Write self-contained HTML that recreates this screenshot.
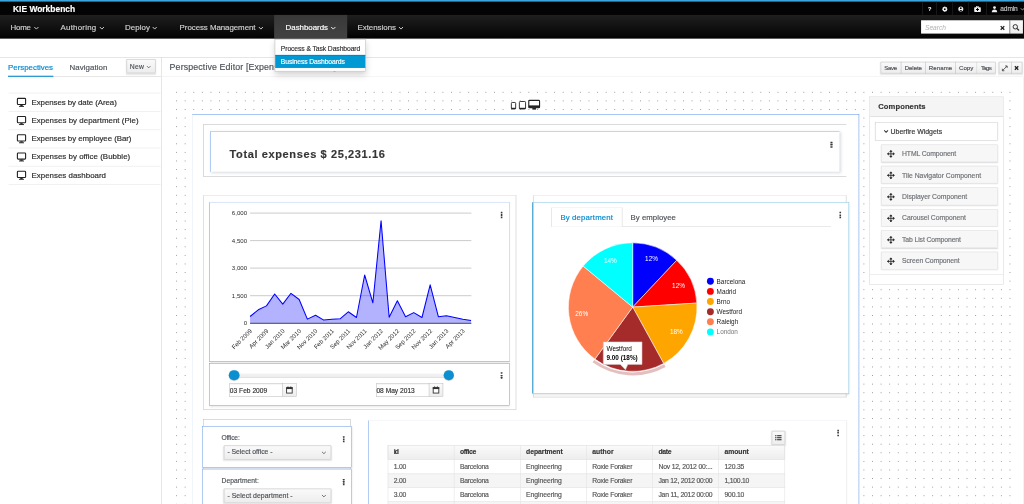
<!DOCTYPE html>
<html lang="en">
<head>
<meta charset="utf-8">
<title>KIE Workbench</title>
<style>
html,body{margin:0;padding:0}
body{width:1024px;height:504px;overflow:hidden;background:#fff;font-family:"Liberation Sans",sans-serif;color:#363636}
#s{position:absolute;left:0;top:0;width:1920px;height:945px;transform:scale(.5333333);transform-origin:0 0;overflow:hidden;font-size:12px;background:#fff;filter:blur(.75px);-webkit-text-stroke:.3px}
.a{position:absolute;box-sizing:border-box}
.t{position:absolute;line-height:1;white-space:nowrap}
svg{position:absolute;overflow:visible}
.nav{color:#d0d0d0;font-size:14.812px}
.btn{position:absolute;box-sizing:border-box;border:1px solid #bbb;background:linear-gradient(#fafafa,#ededed);box-shadow:0 2px 3px rgba(3,3,3,.1)}
.li{position:absolute;left:16.406px;width:285px;height:1px;background:#e4e4e4}
.lt{font-size:14.812px;color:#2b2b2b;left:59.062px}
.cmp{position:absolute;box-sizing:border-box;left:1651.5px;width:219.188px;height:33.375px;border:1px solid #e2e2e2;background:#f7f7f7;box-shadow:0 1px 2px rgba(3,3,3,.15)}
.ct{font-size:12.75px;color:#6e7277;left:1691.25px}
.card{position:absolute;box-sizing:border-box;background:#fff;border:1px solid #6f9ee9;box-shadow:1px 2px 4px rgba(3,3,3,.12)}
.colbox{position:absolute;box-sizing:border-box;border:1px solid #bcbcbc;background:#fff}
.keb i{position:absolute;left:0;width:3.375px;height:3.188px;background:#3a3a3a;border-radius:0.375px}
.keb{position:absolute;width:3.375px;height:13.125px}
.ax{font-size:6.1px;fill:#2a2a2a;-webkit-text-stroke:0;font-family:"Liberation Sans",sans-serif}
.th{font-size:12.75px;font-weight:bold;color:#363636}
.td{font-size:12.75px;color:#565656}
</style>
</head>
<body>
<div id="s">

<!-- ================= HEADER ================= -->
<div class="a" style="left:0;top:0;width:1920px;height:72.375px;background:#030303"></div>
<div class="a" style="left:0;top:0;width:1920px;height:3.188px;background:#39a5dc"></div>
<div class="a" style="left:0;top:28.125px;width:1920px;height:44.25px;background:linear-gradient(#1f1f1f,#030303)"></div>
<div class="t" style="left:24.375px;top:8.812px;font-size:15.806px;font-weight:bold;color:#fff">KIE Workbench</div>

<!-- active nav bg -->
<div class="a" style="left:513.938px;top:28.125px;width:136.688px;height:44.25px;background:linear-gradient(#383838,#434343)"></div>

<div class="t nav" style="left:19.875px;top:43.688px;letter-spacing:-0.42px">Home</div>
<div class="t nav" style="left:113.625px;top:43.688px;letter-spacing:0.418px">Authoring</div>
<div class="t nav" style="left:234.375px;top:43.688px;letter-spacing:0.116px">Deploy</div>
<div class="t nav" style="left:336.75px;top:43.688px;letter-spacing:-0.094px">Process Management</div>
<div class="t nav" style="left:535.5px;top:43.688px;color:#fff;letter-spacing:-0.021px">Dashboards</div>
<div class="t nav" style="left:670.312px;top:43.688px;letter-spacing:-0.03px">Extensions</div>
<svg style="left:0;top:0" width="1920px" height="75px" viewBox="0 0 1024 40" fill="none" stroke="#dbdada" stroke-width="0.9">
<polyline points="34.3,27 36.4,29.1 38.5,27"/>
<polyline points="99.8,27 101.9,29.1 104,27"/>
<polyline points="152.7,27 154.7,29.1 156.7,27"/>
<polyline points="258.9,27 260.9,29.1 262.9,27"/>
<polyline points="331.2,27 333.3,29.1 335.4,27" stroke="#fff"/>
<polyline points="399,27 401,29.1 403,27"/>
</svg>

<!-- utility icons -->
<div class="a" style="left:1728.75px;top:3.188px;width:1px;height:24.938px;background:#2b2b2b"></div>
<div class="a" style="left:1755.375px;top:3.188px;width:1px;height:24.938px;background:#2b2b2b"></div>
<div class="a" style="left:1785.75px;top:3.188px;width:1px;height:24.938px;background:#2b2b2b"></div>
<div class="a" style="left:1815.75px;top:3.188px;width:1px;height:24.938px;background:#2b2b2b"></div>
<div class="a" style="left:1849.125px;top:3.188px;width:1px;height:24.938px;background:#2b2b2b"></div>
<div class="t" style="left:1739.812px;top:12.188px;font-size:10.5px;font-weight:bold;color:#f0f0f0">?</div>
<svg style="left:0;top:0" width="1920px" height="75px" viewBox="0 0 1024 40">
<!-- gear -->
<circle cx="944.8" cy="9.2" r="1.65" fill="none" stroke="#f0f0f0" stroke-width="1.3"/>
<g stroke="#f0f0f0" stroke-width="1.05"><line x1="944.8" y1="6.6" x2="944.8" y2="11.8"/><line x1="942.2" y1="9.2" x2="947.4" y2="9.2"/><line x1="943" y1="7.4" x2="946.6" y2="11"/><line x1="946.6" y1="7.4" x2="943" y2="11"/></g>
<circle cx="944.8" cy="9.2" r="0.85" fill="#030303"/>
<!-- user circle -->
<circle cx="960.8" cy="9.1" r="2.5" fill="#f0f0f0"/>
<circle cx="960.8" cy="8.2" r="0.9" fill="#030303"/><path d="M959.3 10.9 q1.5 -2 3 0z" fill="#030303"/>
<!-- medkit -->
<rect x="974.2" y="7.2" width="6.6" height="4.7" rx=".7" fill="#f0f0f0"/><rect x="976.3" y="6.3" width="2.4" height="1.2" fill="none" stroke="#f0f0f0" stroke-width=".6"/>
<path d="M977 8.1h1v1h1v1h-1v1h-1v-1h-1v-1h1z" fill="#030303"/>
<!-- user -->
<circle cx="994.5" cy="7.6" r="1.45" fill="#f0f0f0"/><path d="M991.8 12.2 q0 -2.8 2.7 -2.8 q2.7 0 2.7 2.8z" fill="#f0f0f0"/>
<polyline points="1020.8,8.3 1022.5,10 1024.2,8.3" fill="none" stroke="#c8c8c8" stroke-width=".8"/>
</svg>
<div class="t" style="left:1875.562px;top:11.25px;font-size:12.375px;color:#c4c4c4;letter-spacing:-0.223px">admin</div>

<!-- search -->
<div class="a" style="left:1726.875px;top:38.25px;width:165.75px;height:25.125px;background:#fff"></div>
<div class="a" style="left:1892.625px;top:38.25px;width:25.312px;height:25.125px;background:linear-gradient(#fafafa,#ededed);border-left:1px solid #bbb"></div>
<div class="t" style="left:1734.375px;top:46.125px;font-size:12.375px;font-style:italic;color:#b0b0b0;-webkit-text-stroke:0;letter-spacing:0.034px">Search</div>
<svg style="left:0;top:0" width="1920px" height="75px" viewBox="0 0 1024 40" fill="none">
<path d="M1000.7 26.1l3.6 3.6m0 -3.6l-3.6 3.6" stroke="#222" stroke-width="1.3"/>
<circle cx="1015.3" cy="26.8" r="2.2" stroke="#333" stroke-width="1"/><line x1="1017" y1="28.5" x2="1019" y2="30.5" stroke="#333" stroke-width="1.2"/>
</svg>

<!-- ================= SUB HEADER LINES ================= -->
<div class="a" style="left:0;top:107.25px;width:1920px;height:1px;background:#d1d1d1"></div>
<div class="a" style="left:301.875px;top:107.25px;width:1px;height:838.125px;background:#d1d1d1"></div>
<div class="a" style="left:15px;top:143.25px;width:286.875px;height:1px;background:#d1d1d1"></div>
<div class="a" style="left:302.812px;top:143.25px;width:1616.25px;height:1px;background:#ededed"></div>
<div class="a" style="left:1918.5px;top:144.375px;width:1px;height:800.625px;background:#e6e6e6"></div>

<!-- ================= LEFT PANEL ================= -->
<div class="t" style="left:15.188px;top:118.688px;font-size:14.812px;color:#0088ce;letter-spacing:-0.037px">Perspectives</div>
<div class="a" style="left:15px;top:141.562px;width:84.75px;height:2.812px;background:#0088ce"></div>
<div class="t" style="left:130.5px;top:118.688px;font-size:14.812px;color:#4d5258;letter-spacing:0.097px">Navigation</div>
<div class="btn" style="left:236.812px;top:111.375px;width:54.938px;height:25.688px;border-radius:1px"></div>
<div class="t" style="left:243.375px;top:118.5px;font-size:12.75px;color:#4d5258;letter-spacing:0.371px">New</div>
<svg style="left:0;top:93.75px" width="375px" height="75px" viewBox="0 50 200 40" fill="none" stroke="#4d5258" stroke-width=".8"><polyline points="147,66 148.7,67.7 150.4,66"/></svg>

<div class="li" style="top:174.375px"></div>
<div class="li" style="top:208.5px"></div>
<div class="li" style="top:242.625px"></div>
<div class="li" style="top:276.75px"></div>
<div class="li" style="top:311.062px"></div>
<div class="li" style="top:345.188px"></div>
<div class="t lt" style="top:184.312px;letter-spacing:-0.131px">Expenses by date (Area)</div>
<div class="t lt" style="top:218.438px;letter-spacing:0.066px">Expenses by department (Pie)</div>
<div class="t lt" style="top:252.562px;letter-spacing:-0.099px">Expenses by employee (Bar)</div>
<div class="t lt" style="top:286.688px;letter-spacing:0.041px">Expenses by office (Bubble)</div>
<div class="t lt" style="top:321px;letter-spacing:0.041px">Expenses dashboard</div>
<svg style="left:0;top:168.75px" width="75px" height="187.5px" viewBox="0 90 40 100">
<defs><g id="mon"><rect x="17.4" y="0.4" width="8.2" height="6.2" rx=".8" fill="none" stroke="#222" stroke-width="1.1"/><rect x="20.3" y="7" width="2.4" height="1.3" fill="#222"/><rect x="19" y="8" width="5" height=".9" fill="#222"/></g></defs>
<use href="#mon" y="97.8"/><use href="#mon" y="116"/><use href="#mon" y="134.2"/><use href="#mon" y="152.4"/><use href="#mon" y="170.7"/>
</svg>

<!-- ================= EDITOR TITLE + TOOLBAR ================= -->
<div class="t" style="left:318px;top:117.188px;font-size:16.5px;color:#4d5258;letter-spacing:0.246px">Perspective Editor [Expenses dashboard]</div>

<div class="btn" style="left:1651.125px;top:116.438px;width:215.438px;height:21.375px;border-radius:1px"></div>
<div class="a" style="left:1688.625px;top:116.438px;width:1px;height:21.375px;background:#bbb"></div>
<div class="a" style="left:1735.125px;top:116.438px;width:1px;height:21.375px;background:#bbb"></div>
<div class="a" style="left:1791px;top:116.438px;width:1px;height:21.375px;background:#bbb"></div>
<div class="a" style="left:1831.125px;top:116.438px;width:1px;height:21.375px;background:#d0d0d0"></div>
<div class="t" style="left:1658.062px;top:122.062px;font-size:11.438px;color:#4d5258;letter-spacing:-0.69px">Save</div>
<div class="t" style="left:1696.312px;top:122.062px;font-size:11.438px;color:#4d5258;letter-spacing:-0.126px">Delete</div>
<div class="t" style="left:1741.5px;top:122.062px;font-size:11.438px;color:#4d5258;letter-spacing:0.129px">Rename</div>
<div class="t" style="left:1798.125px;top:122.062px;font-size:11.438px;color:#4d5258;letter-spacing:0.037px">Copy</div>
<div class="t" style="left:1839.188px;top:122.062px;font-size:11.438px;color:#4d5258;letter-spacing:-1.177px">Tags</div>
<div class="btn" style="left:1873.125px;top:116.438px;width:43.875px;height:21.375px;border-radius:1px"></div>
<div class="a" style="left:1895.625px;top:116.438px;width:1px;height:21.375px;background:#bbb"></div>
<svg style="left:1856.25px;top:112.5px" width="63.75px" height="30px" viewBox="990 60 34 16" fill="none" stroke="#222">
<path d="M1002.8 70.2l4.2 -4.2" stroke-width=".7"/><path d="M1005.3 65.7h2v2" stroke-width=".7"/><path d="M1002.5 68.5v2h2" stroke-width=".7"/>
<path d="M1015 66l3.4 3.4m0 -3.4l-3.4 3.4" stroke-width="1.3"/>
</svg>

<!-- ================= DOTTED CANVAS ================= -->
<div class="a" style="left:322.875px;top:165.375px;width:1579.5px;height:787.5px;background-image:radial-gradient(circle,#999 0,#999 .95px,rgba(153,153,153,0) 1.5px);background-size:16.116px 16.106px;background-position:0 0"></div>

<!-- device icons -->
<svg style="left:946.875px;top:180px" width="75px" height="30px" viewBox="505 96 40 16">
<rect x="511.3" y="102.5" width="4.3" height="6.5" rx=".8" fill="#fff" stroke="#222" stroke-width=".9"/><rect x="511.3" y="107.8" width="4.3" height="1.2" fill="#222"/>
<rect x="519.3" y="101.5" width="6.2" height="7.5" rx=".8" fill="#fff" stroke="#222" stroke-width=".9"/><rect x="519.3" y="107.8" width="6.2" height="1.2" fill="#222"/>
<rect x="528.7" y="100.4" width="10.8" height="7.4" rx=".9" fill="#fff" stroke="#222" stroke-width="1.1"/><rect x="528.7" y="105.4" width="10.8" height="2.4" fill="#222"/><rect x="532.3" y="108" width="3.6" height="1.6" fill="#222"/>
</svg>

<!-- ================= MAIN CONTAINER ================= -->
<div class="a" style="left:359.625px;top:213.75px;width:1251px;height:750px;background:#fff;border:1px solid #5f92e6;border-left-color:#e3eaf8"></div>

<!-- row 1 -->
<div class="colbox" style="left:380.812px;top:233.062px;width:1206.375px;height:97.875px;border-right:none"></div>
<div class="card" style="left:393.938px;top:245.812px;width:1179.938px;height:76.688px;border-top-color:#8fb3ee;border-right:none;border-bottom:none;box-shadow:2px 2px 5px rgba(40,60,110,.18)"></div>
<div class="t" style="left:430.5px;top:279.938px;font-size:20.625px;font-weight:bold;color:#363636;letter-spacing:1.161px">Total expenses $ 25,231.16</div>
<div class="keb" style="left:1557.188px;top:265.5px"><i style="top:0"></i><i style="top:4.312px"></i><i style="top:8.625px"></i></div>

<!-- row 2 left: area chart + slider -->
<div class="colbox" style="left:380.812px;top:365.812px;width:587.062px;height:402px;border-color:#c4c4c4;border-top-color:#dcdcdc"></div>
<div class="card" style="left:392.25px;top:378.75px;width:563.812px;height:299.062px;border-top-color:#bcd2f4;border-right-color:#a9c5f1"></div>
<div class="keb" style="left:938.812px;top:397.125px"><i style="top:0"></i><i style="top:4.312px"></i><i style="top:8.625px"></i></div>
<svg style="left:421.875px;top:384.375px" width="487.5px" height="290.625px" viewBox="225 205 260 155">
<g stroke="#a8a8a8" stroke-width=".6"><line x1="250" y1="213.3" x2="471.3" y2="213.3"/><line x1="250" y1="240.8" x2="471.3" y2="240.8"/><line x1="250" y1="268.3" x2="471.3" y2="268.3"/><line x1="250" y1="295.9" x2="471.3" y2="295.9"/></g>
<polygon points="250,323.4 250.0,316.7 258.2,310.0 266.4,306.1 274.6,294.2 282.7,304.3 290.9,293.5 299.1,299.7 307.3,319.3 315.5,315.4 323.7,320.3 331.9,319.5 340.0,319.0 348.2,312.0 356.4,317.7 364.6,275.2 372.8,303.0 381.0,221.0 389.1,317.5 397.3,301.0 405.5,316.9 413.7,312.8 421.9,317.7 430.1,285.0 438.3,316.9 446.4,315.9 454.6,317.7 462.8,319.5 471.0,320.8 471,323.4" fill="#0000ff" fill-opacity=".3"/>
<polyline points="250.0,316.7 258.2,310.0 266.4,306.1 274.6,294.2 282.7,304.3 290.9,293.5 299.1,299.7 307.3,319.3 315.5,315.4 323.7,320.3 331.9,319.5 340.0,319.0 348.2,312.0 356.4,317.7 364.6,275.2 372.8,303.0 381.0,221.0 389.1,317.5 397.3,301.0 405.5,316.9 413.7,312.8 421.9,317.7 430.1,285.0 438.3,316.9 446.4,315.9 454.6,317.7 462.8,319.5 471.0,320.8" fill="none" stroke="#0000ff" stroke-width="1.05" stroke-linejoin="round"/>
<line x1="250" y1="323.5" x2="471.3" y2="323.5" stroke="#333" stroke-width=".9"/>
<text class="ax" text-anchor="end" x="247" y="215.5">6,000</text>
<text class="ax" text-anchor="end" x="247" y="243">4,500</text>
<text class="ax" text-anchor="end" x="247" y="270.5">3,000</text>
<text class="ax" text-anchor="end" x="247" y="298.1">1,500</text>
<text class="ax" text-anchor="end" x="247" y="325.6">0</text>
<text class="ax" text-anchor="end" transform="translate(249.1 328.4) rotate(-45)" x="0" y="4.6">Feb 2009</text>
<text class="ax" text-anchor="end" transform="translate(265.5 328.4) rotate(-45)" x="0" y="4.6">Apr 2009</text>
<text class="ax" text-anchor="end" transform="translate(281.8 328.4) rotate(-45)" x="0" y="4.6">Jan 2010</text>
<text class="ax" text-anchor="end" transform="translate(298.2 328.4) rotate(-45)" x="0" y="4.6">Mar 2010</text>
<text class="ax" text-anchor="end" transform="translate(314.6 328.4) rotate(-45)" x="0" y="4.6">Nov 2010</text>
<text class="ax" text-anchor="end" transform="translate(331.0 328.4) rotate(-45)" x="0" y="4.6">Feb 2011</text>
<text class="ax" text-anchor="end" transform="translate(347.3 328.4) rotate(-45)" x="0" y="4.6">Sep 2011</text>
<text class="ax" text-anchor="end" transform="translate(363.7 328.4) rotate(-45)" x="0" y="4.6">Nov 2011</text>
<text class="ax" text-anchor="end" transform="translate(380.1 328.4) rotate(-45)" x="0" y="4.6">Jan 2012</text>
<text class="ax" text-anchor="end" transform="translate(396.4 328.4) rotate(-45)" x="0" y="4.6">May 2012</text>
<text class="ax" text-anchor="end" transform="translate(412.8 328.4) rotate(-45)" x="0" y="4.6">Sep 2012</text>
<text class="ax" text-anchor="end" transform="translate(429.2 328.4) rotate(-45)" x="0" y="4.6">Nov 2012</text>
<text class="ax" text-anchor="end" transform="translate(445.5 328.4) rotate(-45)" x="0" y="4.6">Jan 2013</text>
<text class="ax" text-anchor="end" transform="translate(461.9 328.4) rotate(-45)" x="0" y="4.6">Apr 2013</text>
</svg>

<div class="card" style="left:392.25px;top:681.375px;width:563.812px;height:79.312px"></div>
<div class="keb" style="left:938.812px;top:698.25px"><i style="top:0"></i><i style="top:4.312px"></i><i style="top:8.625px"></i></div>
<div class="a" style="left:436.875px;top:699.75px;width:405px;height:8.812px;background:linear-gradient(#f3f3f3,#ececec);border-bottom:1px solid #cfcfcf;border-radius:3.75px"></div>
<div class="a" style="left:429.375px;top:693.562px;width:19.5px;height:19.5px;border-radius:50%;background:#0b8fd1;box-shadow:0 1px 2px rgba(0,0,0,.3)"></div>
<div class="a" style="left:831.562px;top:693.562px;width:19.5px;height:19.5px;border-radius:50%;background:#0b8fd1;box-shadow:0 1px 2px rgba(0,0,0,.3)"></div>
<div class="a" style="left:429.75px;top:718.5px;width:99.938px;height:25.125px;background:#fff;border:1px solid #bbb;border-right:none;box-shadow:inset 0 1px 1px rgba(3,3,3,.075)"></div>
<div class="btn" style="left:529.312px;top:718.5px;width:27px;height:25.125px;box-shadow:none"></div>
<div class="t" style="left:430.875px;top:725.812px;font-size:12.375px;color:#333;letter-spacing:0.064px">03 Feb 2009</div>
<div class="a" style="left:704.625px;top:718.5px;width:99.938px;height:25.125px;background:#fff;border:1px solid #bbb;border-right:none;box-shadow:inset 0 1px 1px rgba(3,3,3,.075)"></div>
<div class="btn" style="left:804.188px;top:718.5px;width:27px;height:25.125px;box-shadow:none"></div>
<div class="t" style="left:705.75px;top:725.812px;font-size:12.375px;color:#333;letter-spacing:0.045px">08 May 2013</div>
<svg style="left:525px;top:712.5px" width="318.75px" height="37.5px" viewBox="280 380 170 20">
<g id="cal"><rect x="286.6" y="387.4" width="5.6" height="5.4" fill="#fff" stroke="#333" stroke-width=".9"/><rect x="286.2" y="387" width="6.4" height="1.8" fill="#333"/><rect x="287.5" y="386.2" width="1" height="1.6" fill="#333"/><rect x="290.3" y="386.2" width="1" height="1.6" fill="#333"/></g>
<use href="#cal" x="146.6"/>
</svg>

<!-- row 2 right: pie -->
<div class="colbox" style="left:1000.125px;top:365.812px;width:586.5px;height:379.312px;border-color:#c4c4c4;border-top-color:#e2e2e2"></div>
<div class="card" style="left:997.5px;top:378.562px;width:594.188px;height:359.062px;border-color:#86c6e2;border-left:2px solid #1f8fc6"></div>
<div class="keb" style="left:1573.688px;top:397.312px"><i style="top:0"></i><i style="top:4.312px"></i><i style="top:8.625px"></i></div>
<div class="a" style="left:1033.875px;top:424.125px;width:524.25px;height:1px;background:#d6d6d6"></div>
<div class="a" style="left:1033.875px;top:389.438px;width:133.312px;height:36px;background:#fff;border:1px solid #d4d4d4;border-top-color:#ececec;border-bottom:none"></div>
<div class="t" style="left:1050.75px;top:400.5px;font-size:14.625px;color:#0088ce;letter-spacing:0.292px">By department</div>
<div class="t" style="left:1182.375px;top:400.5px;font-size:14.625px;color:#4d5258;letter-spacing:0.058px">By employee</div>
<svg style="left:1050px;top:440.625px" width="412.5px" height="281.25px" viewBox="560 235 220 150">
<path d="M632.7 306.9 L632.70 242.60 A64.3 64.3 0 0 1 676.72 260.03 Z" fill="#0000ff" stroke="#fff" stroke-width=".55"/>
<path d="M632.7 306.9 L676.72 260.03 A64.3 64.3 0 0 1 696.87 302.86 Z" fill="#ff0000" stroke="#fff" stroke-width=".55"/>
<path d="M632.7 306.9 L696.87 302.86 A64.3 64.3 0 0 1 663.68 363.25 Z" fill="#ffa500" stroke="#fff" stroke-width=".55"/>
<path d="M632.7 306.9 L663.68 363.25 A64.3 64.3 0 0 1 594.91 358.92 Z" fill="#a52a2a" stroke="#fff" stroke-width=".55"/>
<path d="M632.7 306.9 L594.91 358.92 A64.3 64.3 0 0 1 583.16 265.91 Z" fill="#ff7f50" stroke="#fff" stroke-width=".55"/>
<path d="M632.7 306.9 L583.16 265.91 A64.3 64.3 0 0 1 632.70 242.60 Z" fill="#00ffff" stroke="#fff" stroke-width=".55"/>
<path d="M664.16 364.12 A65.3 65.3 0 0 1 594.32 359.73 L592.55 362.16 A68.3 68.3 0 0 0 665.60 366.75 Z" fill="#a52a2a" fill-opacity=".3"/>

<g font-family="Liberation Sans, sans-serif" font-size="6.4" fill="#fff" text-anchor="middle">
<text x="651.5" y="260.8">12%</text><text x="678.5" y="287.8">12%</text><text x="676.3" y="333.8">18%</text><text x="581.7" y="315.7">26%</text><text x="610.3" y="262.4">14%</text>
</g>
<g font-family="Liberation Sans, sans-serif" font-size="6.4" fill="#222">
<circle cx="710.4" cy="281.1" r="3.45" fill="#0000ff"/><text x="716.6" y="283.4">Barcelona</text>
<circle cx="710.4" cy="291.2" r="3.45" fill="#ff0000"/><text x="716.6" y="293.5">Madrid</text>
<circle cx="710.4" cy="301.3" r="3.45" fill="#ffa500"/><text x="716.6" y="303.6">Brno</text>
<circle cx="710.4" cy="311.5" r="3.45" fill="#a52a2a"/><text x="716.6" y="313.8">Westford</text>
<circle cx="710.4" cy="321.6" r="3.45" fill="#ff7f50"/><text x="716.6" y="323.9">Raleigh</text>
<circle cx="710.4" cy="331.7" r="3.45" fill="#00ffff"/><text x="716.6" y="334.0" fill="#777">London</text>
</g>
<path d="M603.3 341.7h38.7v22.5h-14.2l-2.3 5.4l-5.2 -5.4h-17z" fill="#fff" stroke="#ccc" stroke-width=".55"/>
<g font-family="Liberation Sans, sans-serif" font-size="6.4" fill="#000"><text x="606.5" y="351.3">Westford</text><text x="606.5" y="359.7" font-weight="bold">9.00 (18%)</text></g>
</svg>


<!-- row 3 left: selectors -->
<div class="colbox" style="left:380.812px;top:786.188px;width:277.312px;height:187.5px"></div>
<div class="card" style="left:379.312px;top:798.75px;width:280.312px;height:78.188px"></div>
<div class="card" style="left:379.312px;top:878.812px;width:280.312px;height:78.188px"></div>
<div class="t" style="left:415.312px;top:814.5px;font-size:12.562px;color:#4d5258;letter-spacing:-0.294px">Office:</div>
<div class="t" style="left:415.312px;top:895.125px;font-size:12.562px;color:#4d5258;letter-spacing:0.099px">Department:</div>
<div class="keb" style="left:642.562px;top:817.5px"><i style="top:0"></i><i style="top:4.312px"></i><i style="top:8.625px"></i></div>
<div class="keb" style="left:642.562px;top:897.75px"><i style="top:0"></i><i style="top:4.312px"></i><i style="top:8.625px"></i></div>
<div class="btn" style="left:420.188px;top:834.938px;width:200.812px;height:26.625px;border-radius:1px"></div>
<div class="btn" style="left:420.188px;top:915.938px;width:200.812px;height:26.625px;border-radius:1px"></div>
<div class="t" style="left:426.375px;top:842.062px;font-size:12.938px;color:#4d5258;letter-spacing:-0.081px">- Select office -</div>
<div class="t" style="left:426.375px;top:923.062px;font-size:12.938px;color:#4d5258;letter-spacing:0.082px">- Select department -</div>
<svg style="left:590.625px;top:825px" width="37.5px" height="120px" viewBox="315 440 20 64" fill="none" stroke="#4d5258" stroke-width=".8"><polyline points="321.8,451.8 323.7,453.7 325.6,451.8"/><polyline points="321.8,495 323.7,496.9 325.6,495"/></svg>

<!-- row 3 right: table -->
<div class="card" style="left:690.188px;top:787.688px;width:897.938px;height:187.5px;border-top-color:#eef1f6;border-right-color:#e4e4e4"></div>
<div class="keb" style="left:1569.562px;top:805.875px"><i style="top:0"></i><i style="top:4.312px"></i><i style="top:8.625px"></i></div>
<div class="btn" style="left:1446.562px;top:808.312px;width:25.125px;height:25.5px;border-radius:1px"></div>
<svg style="left:1443.75px;top:806.25px" width="30px" height="30px" viewBox="770 430 16 16" fill="#333"><rect x="775" y="435.3" width="1.3" height="1.1"/><rect x="777" y="435.3" width="4.4" height="1.1"/><rect x="775" y="437.3" width="1.3" height="1.1"/><rect x="777" y="437.3" width="4.4" height="1.1"/><rect x="775" y="439.3" width="1.3" height="1.1"/><rect x="777" y="439.3" width="4.4" height="1.1"/></svg>
<div class="a" style="left:727.312px;top:834.938px;width:744.375px;height:27px;background:linear-gradient(#fafafa,#ededed);border:1px solid #d8d8d8"></div>
<div class="a" style="left:727.312px;top:887.812px;width:744.375px;height:26.438px;background:#f5f5f5"></div>
<div class="a" style="left:727.312px;top:940.5px;width:744.375px;height:26.438px;background:#f5f5f5"></div>
<div class="a" style="left:727.312px;top:887.625px;width:744.375px;height:1px;background:#dedede"></div>
<div class="a" style="left:727.312px;top:914.062px;width:744.375px;height:1px;background:#dedede"></div>
<div class="a" style="left:727.312px;top:940.312px;width:744.375px;height:1px;background:#dedede"></div>
<div class="a" style="left:727.312px;top:834.938px;width:1px;height:112.5px;background:#e2e2e2"></div>
<div class="a" style="left:851.25px;top:834.938px;width:1px;height:112.5px;background:#e2e2e2"></div>
<div class="a" style="left:975.375px;top:834.938px;width:1px;height:112.5px;background:#e2e2e2"></div>
<div class="a" style="left:1099.312px;top:834.938px;width:1px;height:112.5px;background:#e2e2e2"></div>
<div class="a" style="left:1223.438px;top:834.938px;width:1px;height:112.5px;background:#e2e2e2"></div>
<div class="a" style="left:1347.375px;top:834.938px;width:1px;height:112.5px;background:#e2e2e2"></div>
<div class="a" style="left:1471.312px;top:834.938px;width:1px;height:112.5px;background:#e2e2e2"></div>
<div class="t th" style="left:738.375px;top:841.312px;letter-spacing:-1.768px">id</div>
<div class="t th" style="left:862.312px;top:841.312px;letter-spacing:-0.688px">office</div>
<div class="t th" style="left:986.438px;top:841.312px;letter-spacing:-0.09px">department</div>
<div class="t th" style="left:1110.375px;top:841.312px;letter-spacing:0.092px">author</div>
<div class="t th" style="left:1234.5px;top:841.312px;letter-spacing:-0.551px">date</div>
<div class="t th" style="left:1358.438px;top:841.312px;letter-spacing:-0.096px">amount</div>
<div class="t td" style="left:738.375px;top:869.438px;letter-spacing:-0.521px">1.00</div>
<div class="t td" style="left:862.312px;top:869.438px;letter-spacing:-0.403px">Barcelona</div>
<div class="t td" style="left:986.438px;top:869.438px;letter-spacing:-0.111px">Engineering</div>
<div class="t td" style="left:1110.375px;top:869.438px;letter-spacing:-0.392px">Roxie Foraker</div>
<div class="t td" style="left:1234.5px;top:869.438px;letter-spacing:-0.339px">Nov 12, 2012 00:...</div>
<div class="t td" style="left:1358.438px;top:869.438px;letter-spacing:-0.337px">120.35</div>
<div class="t td" style="left:738.375px;top:895.688px;letter-spacing:-0.521px">2.00</div>
<div class="t td" style="left:862.312px;top:895.688px;letter-spacing:-0.403px">Barcelona</div>
<div class="t td" style="left:986.438px;top:895.688px;letter-spacing:-0.111px">Engineering</div>
<div class="t td" style="left:1110.375px;top:895.688px;letter-spacing:-0.392px">Roxie Foraker</div>
<div class="t td" style="left:1234.5px;top:895.688px;letter-spacing:-0.444px">Jan 12, 2012 00:00</div>
<div class="t td" style="left:1358.438px;top:895.688px;letter-spacing:-0.42px">1,100.10</div>
<div class="t td" style="left:738.375px;top:921.938px;letter-spacing:-0.521px">3.00</div>
<div class="t td" style="left:862.312px;top:921.938px;letter-spacing:-0.403px">Barcelona</div>
<div class="t td" style="left:986.438px;top:921.938px;letter-spacing:-0.111px">Engineering</div>
<div class="t td" style="left:1110.375px;top:921.938px;letter-spacing:-0.392px">Roxie Foraker</div>
<div class="t td" style="left:1234.5px;top:921.938px;letter-spacing:-0.388px">Jan 11, 2012 00:00</div>
<div class="t td" style="left:1358.438px;top:921.938px;letter-spacing:-0.337px">900.10</div>


<!-- ================= COMPONENTS PANEL ================= -->
<div class="a" style="left:1630.312px;top:180.938px;width:251.25px;height:353.25px;background:#fff;border:1px solid #dadada;box-shadow:0 1px 1px rgba(3,3,3,.05)"></div>
<div class="a" style="left:1631.25px;top:181.875px;width:249.375px;height:36.75px;background:#f5f5f5;border-bottom:1px solid #d1d1d1"></div>
<div class="t" style="left:1646.812px;top:193.125px;font-size:14.25px;font-weight:bold;color:#363636;letter-spacing:0.158px">Components</div>
<div class="a" style="left:1641.188px;top:228.938px;width:229.5px;height:34.688px;background:#fff;border:1px solid #d1d1d1;box-shadow:0 1px 2px rgba(3,3,3,.15)"></div>
<svg style="left:1650px;top:234.375px" width="22.5px" height="22.5px" viewBox="880 125 12 12" fill="none" stroke="#363636" stroke-width=".9"><polyline points="884.2,130.6 886.1,132.5 888,130.6" stroke-width="1.05"/></svg>
<div class="t" style="left:1669.875px;top:241.125px;font-size:12.938px;color:#363636;letter-spacing:0.026px">Uberfire Widgets</div>
<div class="a" style="left:1631.25px;top:514.125px;width:249.375px;height:1px;background:#e0e0e0"></div>
<div class="cmp" style="top:270.75px"></div><div class="t ct" style="top:282.375px;letter-spacing:-0.159px">HTML Component</div>
<div class="cmp" style="top:311.062px"></div><div class="t ct" style="top:322.688px;letter-spacing:0.03px">Tile Navigator Component</div>
<div class="cmp" style="top:351.375px"></div><div class="t ct" style="top:363px;letter-spacing:-0.03px">Displayer Component</div>
<div class="cmp" style="top:391.688px"></div><div class="t ct" style="top:403.312px;letter-spacing:-0.051px">Carousel Component</div>
<div class="cmp" style="top:432px"></div><div class="t ct" style="top:443.625px;letter-spacing:-0.174px">Tab List Component</div>
<div class="cmp" style="top:472.312px"></div><div class="t ct" style="top:483.938px;letter-spacing:-0.124px">Screen Component</div>
<svg style="left:1650px;top:262.5px" width="37.5px" height="262.5px" viewBox="880 140 20 140"><defs><g id="mv" fill="none" stroke="#222" stroke-width=".9"><path d="M887.6 0h6.6M890.9 -3.3v6.6" stroke-width=".8"/><path d="M888.7 -1.2l-1.4 1.2l1.4 1.2zM893.1 -1.2l1.4 1.2l-1.4 1.2zM889.7 -2.2l1.2 -1.4l1.2 1.4zM889.7 2.2l1.2 1.4l1.2 -1.4z" stroke-width=".5" fill="#222"/></g></defs>
<use href="#mv" y="153.6"/><use href="#mv" y="175.1"/><use href="#mv" y="196.6"/><use href="#mv" y="218.1"/><use href="#mv" y="239.6"/><use href="#mv" y="261.1"/></svg>



<!-- ================= DROPDOWN MENU ================= -->
<div class="a" style="left:515.25px;top:72.938px;width:171px;height:61.125px;background:#fff;border:1px solid #b6b6b6;box-shadow:0 6px 12px rgba(0,0,0,.175)"></div>
<div class="a" style="left:516.188px;top:103.312px;width:169.125px;height:24.188px;background:#0099d3;border-top:1px solid #0076b7;border-bottom:1px solid #0076b7"></div>
<div class="t" style="left:526.5px;top:86.062px;font-size:12.75px;color:#333;letter-spacing:-0.195px">Process &amp; Task Dashboard</div>
<div class="t" style="left:526.5px;top:110.25px;font-size:12.75px;color:#fff;letter-spacing:-0.214px">Business Dashboards</div>

</div>
</body>
</html>
